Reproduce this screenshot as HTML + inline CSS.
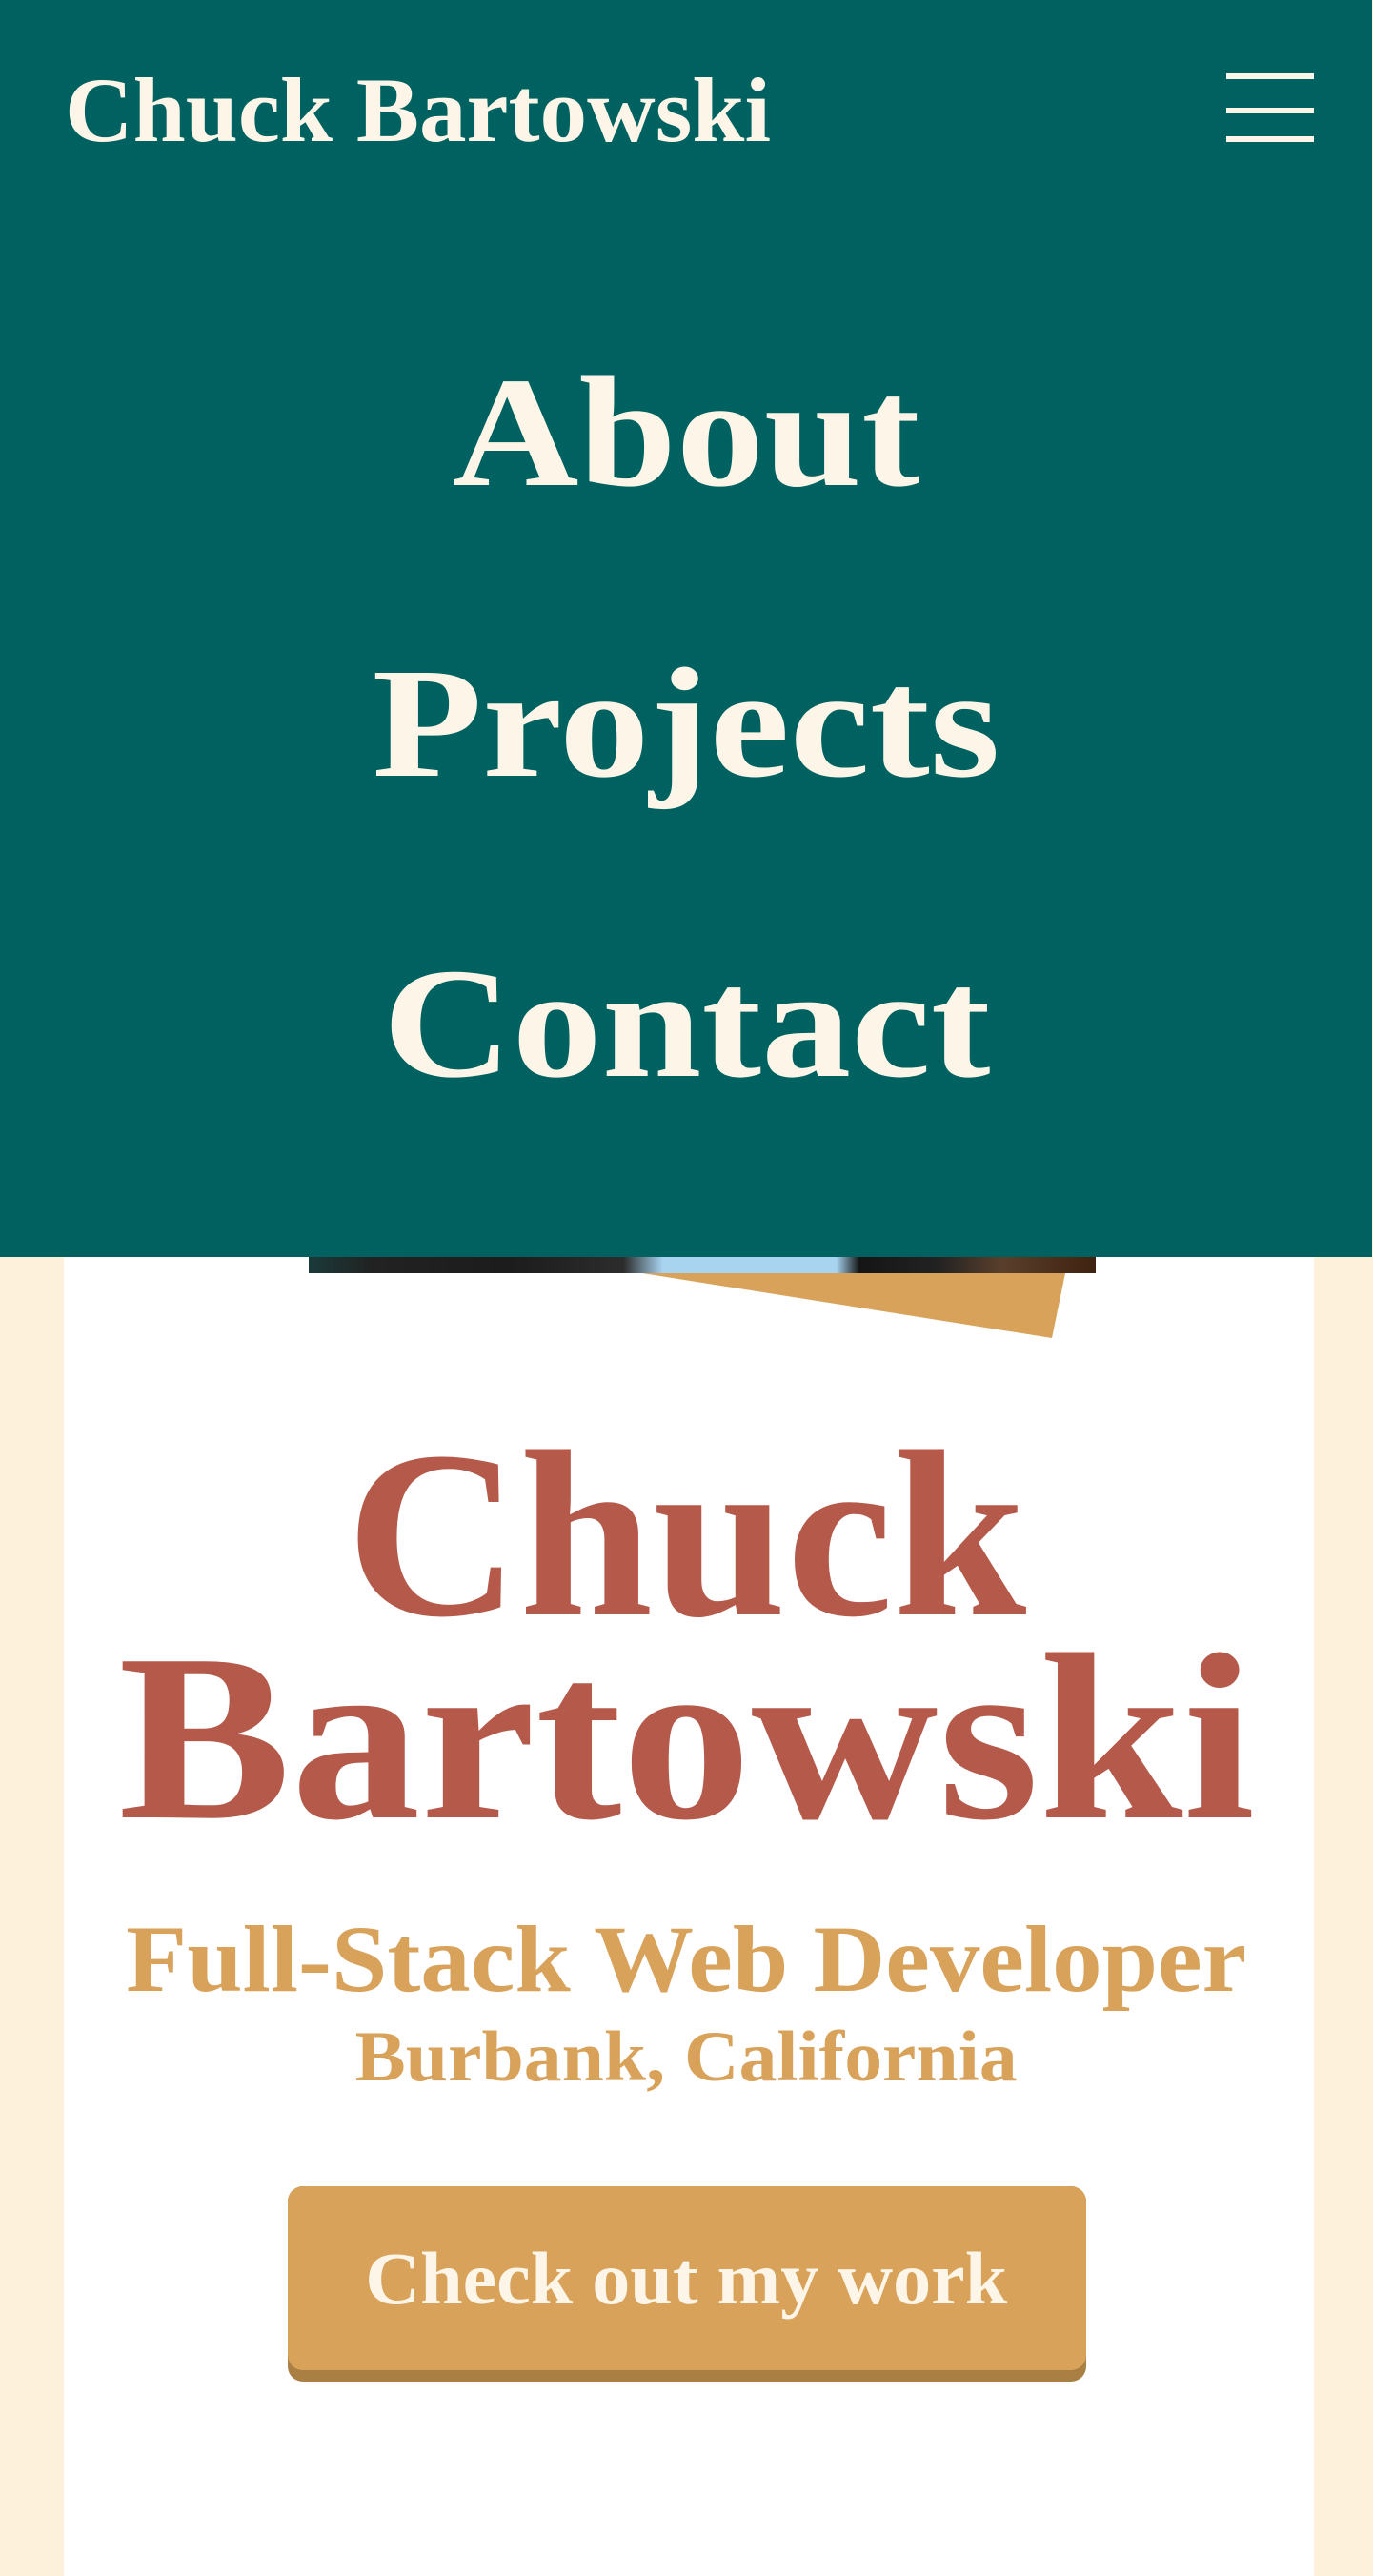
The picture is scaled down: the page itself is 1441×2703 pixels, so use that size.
<!DOCTYPE html>
<html><head><meta charset="utf-8">
<style>
html,body{margin:0;padding:0}
body{width:1441px;height:2703px;position:relative;background:#fdf1dc;overflow:hidden;font-family:"Liberation Serif",serif;font-weight:bold}
.card{position:absolute;left:67px;top:0;width:1312px;height:2703px;background:#fff}
.t{position:absolute;white-space:nowrap;line-height:1}
.t span{display:inline-block;transform-origin:0 0}
.c{left:0;width:1441px;text-align:center}
.c span{transform-origin:50% 0}
.overlay{position:absolute;left:0;top:0;width:1440px;height:1319px;background:#006260}
.photo{position:absolute;left:324px;top:1200px;width:826px;height:136px;background:linear-gradient(90deg,#1a3a3a 0%,#222 8%,#1c1c1c 25%,#2c2c2c 40%,#a8d4f0 45%,#a8d4f0 67%,#151515 70%,#222 80%,#5a3f2c 88%,#3f2210 100%)}
.btn{position:absolute;left:302px;top:2294px;width:838px;height:205px;border-radius:16px;background:#a97f44}
.btn2{position:absolute;left:302px;top:2294px;width:838px;height:193px;border-radius:16px;background:#d8a25a}
</style></head><body>
<div class="card"></div>
<div class="photo"></div>
<svg style="position:absolute;left:0;top:0" width="1441" height="1500"><polygon points="674,1336 1118,1336 1104,1404" fill="#d8a25a"/></svg>
<div class="overlay"></div>
<div class="t" style="left:68px;top:68px;font-size:96px;color:#fdf6e8"><span data-w="741">Chuck Bartowski</span></div>
<div style="position:absolute;left:1287px;top:77px;width:92px;height:6px;background:#fdf6e8"></div>
<div style="position:absolute;left:1287px;top:113px;width:92px;height:6px;background:#fdf6e8"></div>
<div style="position:absolute;left:1287px;top:143px;width:92px;height:6px;background:#fdf6e8"></div>
<div class="t c" style="top:371px;font-size:165px;color:#fdf6e8"><span data-w="491">About</span></div>
<div class="t c" style="top:676px;font-size:165px;color:#fdf6e8"><span data-w="659">Projects</span></div>
<div class="t c" style="top:991px;font-size:165px;color:#fdf6e8"><span data-w="638">Contact</span></div>
<div class="t c" style="top:1486px;font-size:250px;color:#b55a4a"><span data-w="714">Chuck</span></div>
<div class="t c" style="top:1699px;font-size:250px;color:#b55a4a"><span data-w="1193">Bartowski</span></div>
<div class="t c" style="top:2006px;font-size:100px;color:#d8a25a"><span data-w="1176">Full-Stack Web Developer</span></div>
<div class="t c" style="top:2121px;font-size:75px;color:#d8a25a"><span data-w="695">Burbank, California</span></div>
<div class="btn"></div><div class="btn2"></div>
<div class="t c" style="top:2352px;font-size:78px;color:#fdf6e8"><span data-w="674">Check out my work</span></div>
<script>
document.querySelectorAll('span[data-w]').forEach(function(s){
  var w=s.getBoundingClientRect().width;
  if(w>0) s.style.transform='scaleX('+(parseFloat(s.getAttribute('data-w'))/w)+')';
});
</script>
</body></html>
